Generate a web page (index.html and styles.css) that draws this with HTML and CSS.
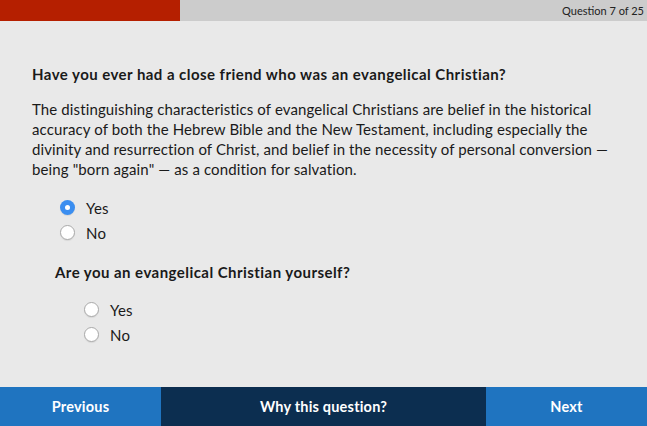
FILE: index.html
```html
<!DOCTYPE html>
<html lang="en">
<head>
    <meta charset="UTF-8">
    <title>Question 7 of 25</title>
    <link rel="stylesheet" href="styles.css">
</head>
<body>
    <div class="progress">
        <div class="progress-fill"></div>
        <span class="progress-label">Question 7 of 25</span>
    </div>

    <main class="quiz">
        <h2 class="question">Have you ever had a close friend who was an evangelical Christian?</h2>
        <p class="description">The distinguishing characteristics of evangelical Christians are belief in the historical accuracy of both the Hebrew Bible and the New Testament, including especially the divinity and resurrection of Christ, and belief in the necessity of personal conversion — being "born again" — as a condition for salvation.</p>

        <div class="choices">
            <label class="choice"><span class="radio checked"></span>Yes</label>
            <label class="choice"><span class="radio"></span>No</label>
        </div>

        <div class="followup">
            <h3 class="question">Are you an evangelical Christian yourself?</h3>
            <div class="choices nested">
                <label class="choice"><span class="radio"></span>Yes</label>
                <label class="choice"><span class="radio"></span>No</label>
            </div>
        </div>
    </main>

    <nav class="footer-nav">
        <button class="nav-btn prev">Previous</button>
        <button class="nav-btn why">Why this question?</button>
        <button class="nav-btn next">Next</button>
    </nav>
</body>
</html>
```

FILE: styles.css
```css
/* --- Base --- */
:root {
    --bg: #e9e9e9;
    --text: #1a1a1a;
    --red: #b51f00;
    --track: #cccccc;
    --blue: #1f74c0;
    --navy: #0c2e50;
    --radio-blue: #3b8ef0;
}

html, body { height: 100%; }

body {
    margin: 0;
    font-family: Lato, 'Open Sans', sans-serif;
    background-color: var(--bg);
    color: var(--text);
    display: flex;
    flex-direction: column;
}

/* --- Progress --- */
.progress {
    height: 21px;
    background-color: var(--track);
    display: flex;
    align-items: center;
    justify-content: space-between;
}
.progress-fill {
    width: 180px;
    height: 100%;
    background-color: var(--red);
}
.progress-label {
    font-size: 11px;
    padding-right: 3px;
    color: #222;
}

/* --- Question --- */
.quiz {
    flex: 1;
    padding: 0 32px;
}
.question {
    font-size: 15px;
    font-weight: 700;
    letter-spacing: 0.45px;
    margin: 43px 0 0;
    line-height: 20px;
}
.description {
    font-size: 15px;
    letter-spacing: 0.12px;
    line-height: 20px;
    margin: 15px 0 0;
}

.choices {
    display: flex;
    flex-direction: column;
    margin-top: 16px;
    padding-left: 28px;
}
.choices.nested {
    padding-left: 29px;
    margin-top: 15px;
}
.choice {
    display: flex;
    align-items: center;
    height: 25px;
    font-size: 15px;
    letter-spacing: 0.2px;
}

.radio {
    width: 15px;
    height: 15px;
    box-sizing: border-box;
    border-radius: 50%;
    border: 1px solid #a9a9a9;
    background-color: #ffffff;
    box-shadow: 0 1px 1px rgba(0, 0, 0, 0.08);
    margin-right: 11px;
    display: inline-flex;
    align-items: center;
    justify-content: center;
}
.radio.checked {
    border: none;
    background-color: var(--radio-blue);
}
.radio.checked::after {
    content: "";
    width: 5px;
    height: 5px;
    border-radius: 50%;
    background-color: #ffffff;
}

.followup { padding-left: 23px; }
.followup .question { margin-top: 17px; }

/* --- Footer Navigation --- */
.footer-nav {
    display: grid;
    grid-template-columns: 161px 1fr 161px;
    height: 39px;
}
.nav-btn {
    border: none;
    font-family: inherit;
    font-size: 14.5px;
    font-weight: 700;
    letter-spacing: 0.2px;
    color: #ffffff;
    cursor: pointer;
}
.prev, .next { background-color: var(--blue); }
.why { background-color: var(--navy); }
```
